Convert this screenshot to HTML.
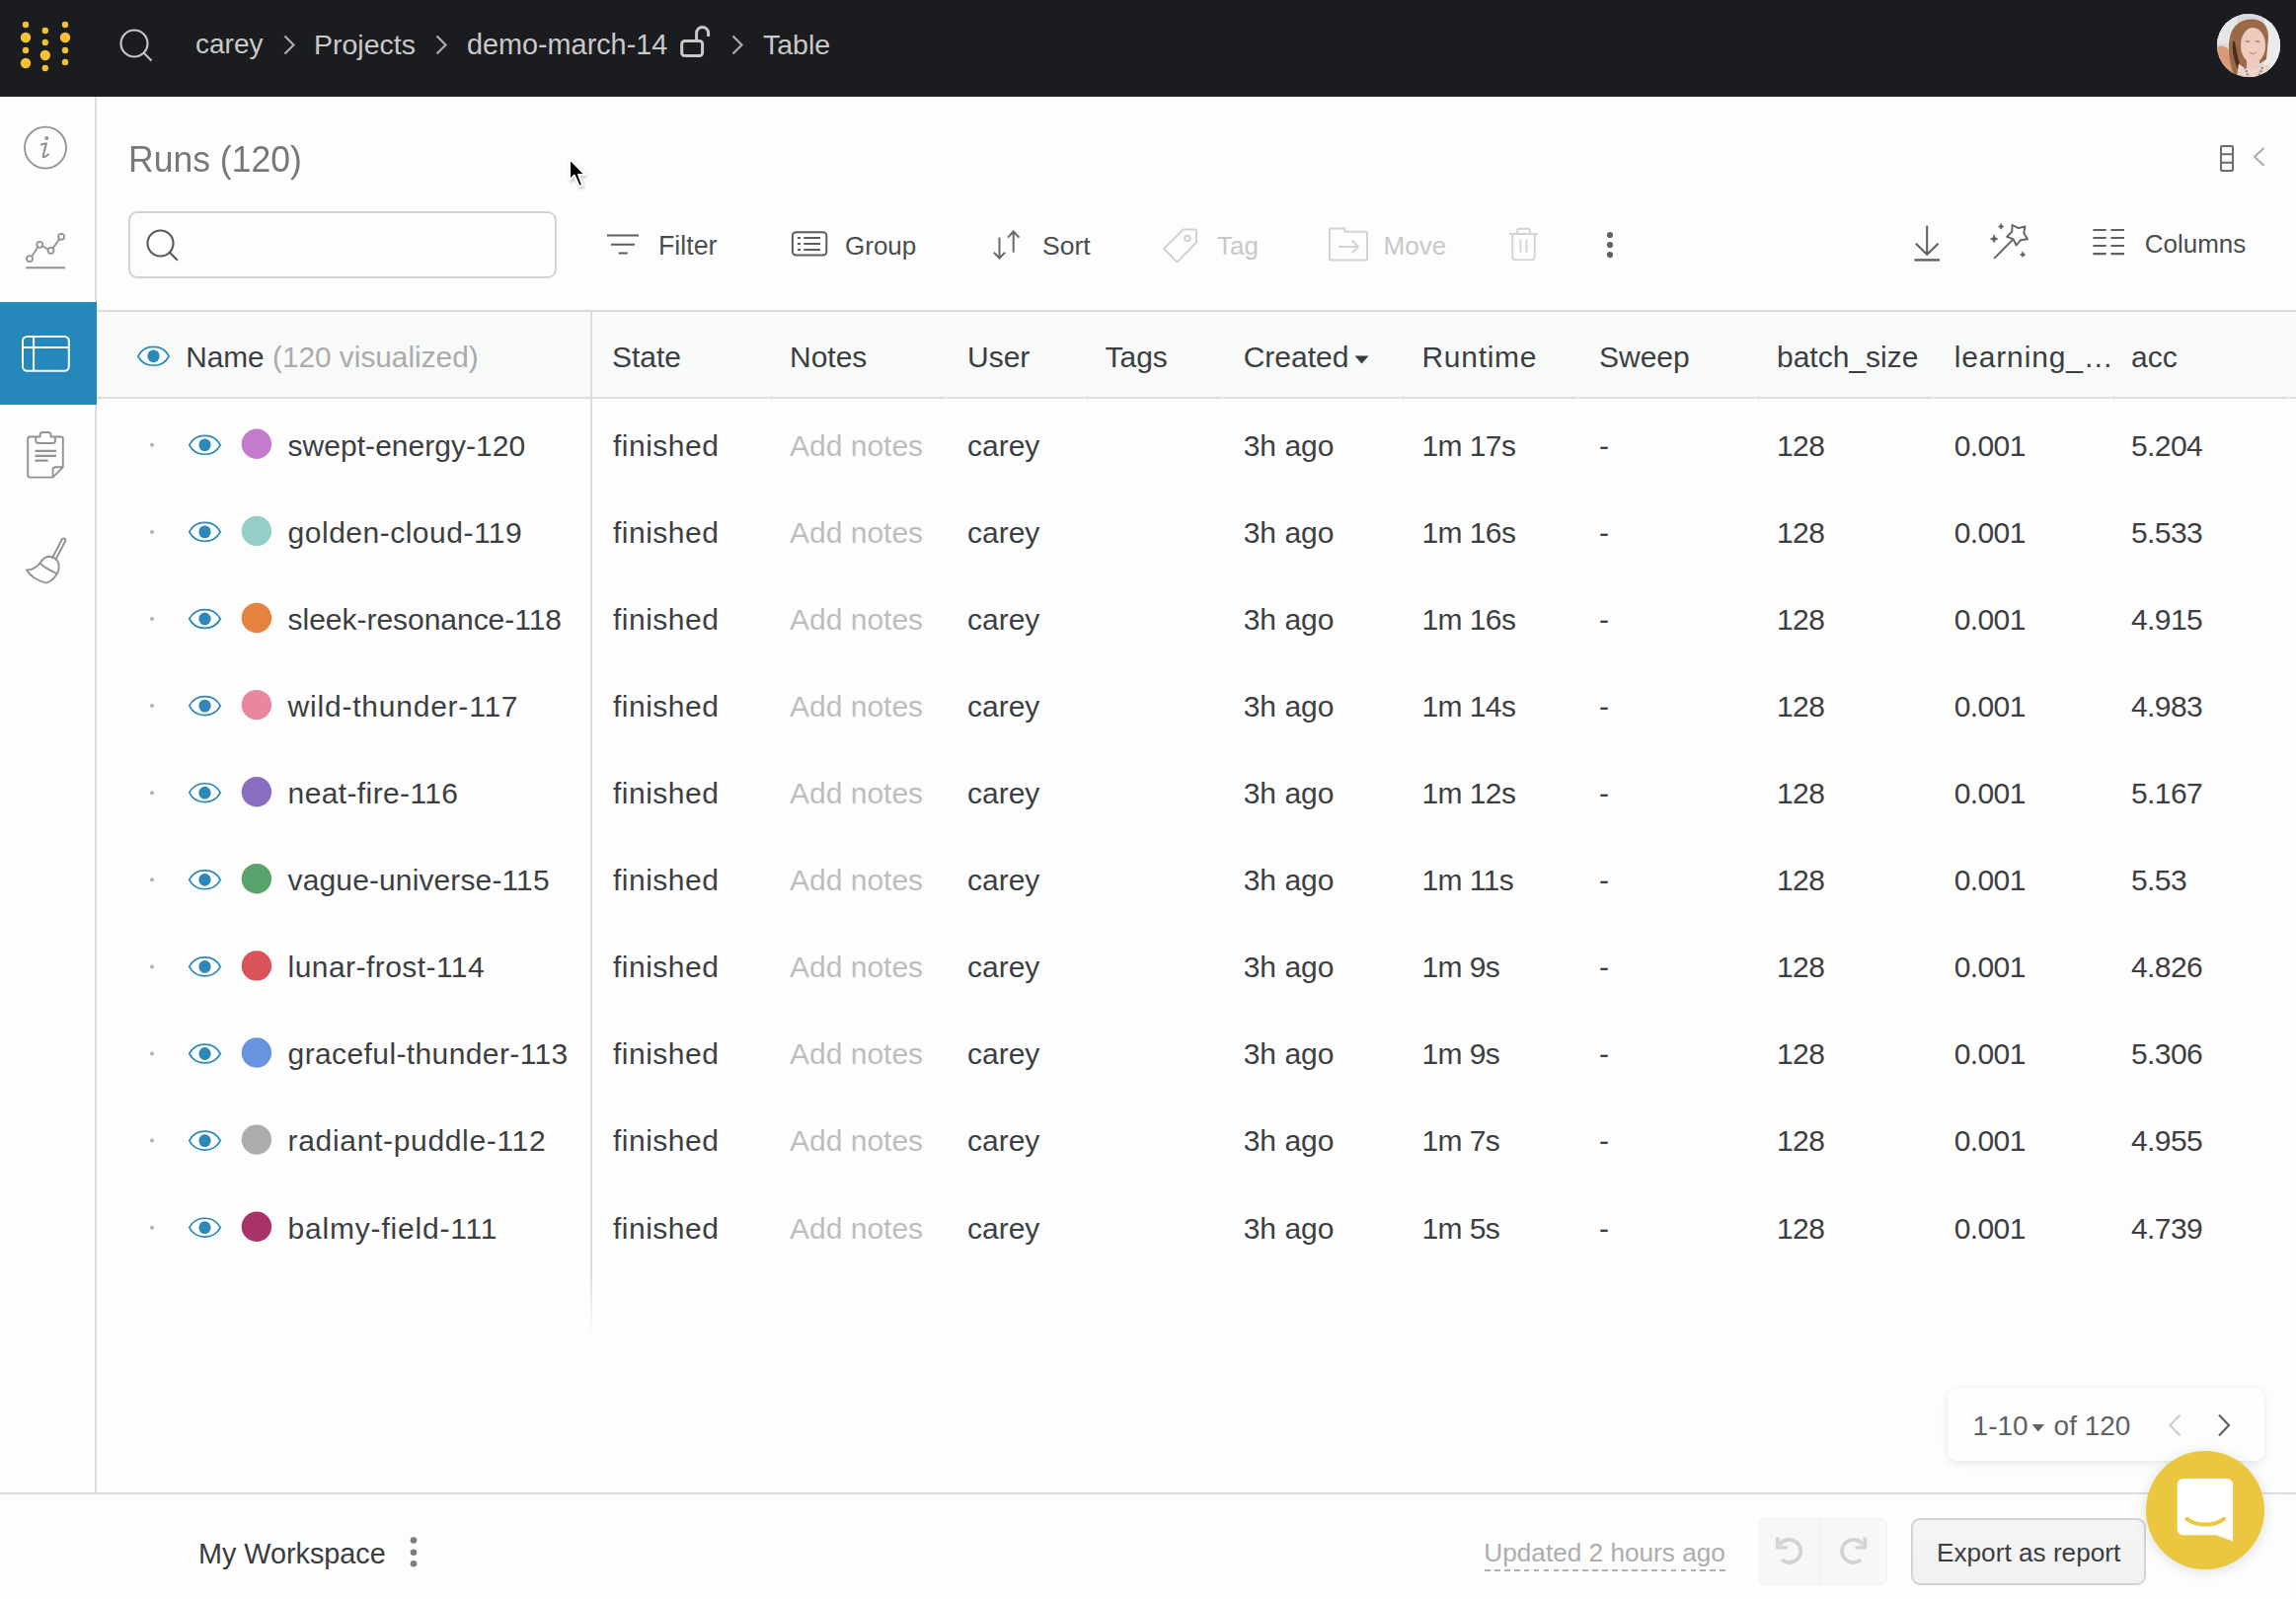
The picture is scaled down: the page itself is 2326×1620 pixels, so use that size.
<!DOCTYPE html>
<html><head><meta charset="utf-8">
<style>
*{box-sizing:border-box;margin:0;padding:0}
html,body{width:2326px;height:1620px;overflow:hidden;background:#fdfdfd;font-family:"Liberation Sans",sans-serif;}
body{position:relative}
.a{position:absolute;white-space:nowrap;line-height:1}
svg{position:absolute;overflow:visible}
#top{position:absolute;left:0;top:0;width:2326px;height:98px;background:#1b1c1f}
.bc{color:#c9c9c9;font-size:28px}
#side{position:absolute;left:0;top:98px;width:98px;height:1414px;border-right:2px solid #dedede}
.tb{color:#4a4d50;font-size:26px}
.dis{color:#c8c8c8}
.hd{color:#3c3f42;font-size:30px}
.cell{color:#3c3f42;font-size:30px}
.num{letter-spacing:-0.6px}
</style></head><body>
<div id="top">
<svg width="100" height="97" style="left:0;top:0" fill="#f3c132">
<circle cx="26" cy="25" r="3.2"/><circle cx="26" cy="38" r="5.2"/><circle cx="26" cy="51" r="3.2"/><circle cx="26" cy="64" r="5.2"/>
<circle cx="45.8" cy="31" r="3.2"/><circle cx="45.8" cy="43" r="3.2"/><circle cx="45.8" cy="56" r="5.2"/><circle cx="45.8" cy="69" r="3.2"/>
<circle cx="66" cy="25" r="3.2"/><circle cx="66" cy="38" r="5.2"/><circle cx="66" cy="51" r="3.2"/><circle cx="66" cy="63" r="3.2"/>
</svg>
<svg width="40" height="40" style="left:120;top:28px;left:120px" fill="none" stroke="#c4c4c4" stroke-width="2.2"><circle cx="16" cy="16" r="13.5"/><path d="M25.5 25.5L33.5 33.5"/></svg>
<div class="a bc" style="left:198px;top:31px">carey</div>
<svg width="20" height="30" style="left:280px;top:30px" fill="none" stroke="#a9acae" stroke-width="2.2"><path d="M8.5 6.5L17.5 15.5L8.5 24.5"/></svg>
<div class="a bc" style="left:318px;top:31px;font-size:28.5px">Projects</div>
<svg width="20" height="30" style="left:434px;top:30px" fill="none" stroke="#a9acae" stroke-width="2.2"><path d="M8.5 6.5L17.5 15.5L8.5 24.5"/></svg>
<div class="a bc" style="left:473px;top:30.5px;font-size:28.8px">demo-march-14</div>
<svg width="40" height="40" style="left:680px;top:20px" fill="none" stroke="#c9c9c9" stroke-width="3"><rect x="10.7" y="21.5" width="20.9" height="15.1" rx="3"/><path d="M25.6 21V13.5A6 6 0 0 1 37.6 13.5V17"/></svg>
<svg width="20" height="30" style="left:734px;top:30px" fill="none" stroke="#a9acae" stroke-width="2.2"><path d="M8.5 6.5L17.5 15.5L8.5 24.5"/></svg>
<div class="a bc" style="left:773px;top:31px;font-size:28.5px">Table</div>
<div style="position:absolute;left:2246px;top:14px;width:64px;height:64px;border-radius:50%;overflow:hidden;background:#dedfe0">
<svg width="64" height="64" style="left:0;top:0">
<rect width="64" height="64" fill="#d9dadb"/>
<rect x="0" y="0" width="20" height="30" fill="#e6e6e6"/>
<rect x="48" y="0" width="16" height="64" fill="#ececec"/>
<path d="M0 34C6 30 12 34 14 42L18 64H0Z" fill="#d99a78"/>
<path d="M14 20C18 8 30 4 40 6C48 8 52 14 52 24L50 46L44 50L26 56L28 64H18C12 50 10 32 14 20Z" fill="#9a6a48"/>
<ellipse cx="36.5" cy="32" rx="12.5" ry="18" fill="#eecbbd"/><rect x="30" y="44" width="13" height="12" fill="#eecbbd"/>
<path d="M18 28C20 38 21 46 25 56L22 58C17 48 15 38 16 28Z" fill="#4b2e1e"/>
<path d="M22 50C28 58 44 58 52 50L54 64H20Z" fill="#efd3c8"/>
<path d="M28 54L32 64M46 54L42 64" stroke="#8a8a8a" stroke-width="2.4" stroke-dasharray="2 1.5"/>
<ellipse cx="31" cy="28" rx="2.5" ry="1" fill="#a38d82"/><ellipse cx="41" cy="28" rx="2.5" ry="1" fill="#a38d82"/>
<path d="M33 39C35 40.5 38 40.5 40 39" stroke="#c98f86" stroke-width="1.2" fill="none"/>
</svg></div>
</div>
<div id="side"></div>
<svg width="60" height="60" style="left:16px;top:120px" fill="none" stroke="#909396" stroke-width="1.8">
<circle cx="30" cy="29.6" r="21"/>
<circle cx="31.25" cy="20.1" r="2" fill="#909396" stroke="none"/>
<path d="M25.9 26.6L30.9 25.3L27.7 37.8C27.3 39.6 28.6 40.1 32.9 36.5" stroke-width="2.1" stroke-linecap="round" stroke-linejoin="round"/>
</svg>
<svg width="60" height="60" style="left:16px;top:220px" fill="none" stroke="#909396" stroke-width="1.8">
<path d="M16.5 39.3L22 31 M27.3 29.5L32.3 32.3 M37.5 31.8L44 22.5"/>
<circle cx="14" cy="42.1" r="3"/><circle cx="24.3" cy="27.8" r="3"/><circle cx="35.5" cy="33.8" r="3"/><circle cx="46.1" cy="19.8" r="3"/>
<path d="M10.2 51.2H49.9" stroke-width="2"/>
</svg>
<div style="position:absolute;left:0;top:306px;width:98px;height:104px;background:#2587ba"></div>
<svg width="60" height="60" style="left:16px;top:328px" fill="none" stroke="#fff" stroke-width="2">
<rect x="7" y="13" width="46.8" height="34.8" rx="4.5"/><path d="M7 24H53.8 M18.1 13V47.8"/>
</svg>
<svg width="60" height="60" style="left:16px;top:420px" fill="none" stroke="#909396" stroke-width="1.9" stroke-linejoin="round">
<path d="M20 22.5H14.5C13 22.5 12.2 23.3 12.2 24.8V61.3C12.2 62.8 13 63.6 14.5 63.6H37.5L47.8 53.3V24.8C47.8 23.3 47 22.5 45.5 22.5H40"/>
<path d="M37.5 63.6V56.3C37.5 54.3 38.5 53.3 40.5 53.3H47.8"/>
<path d="M20.2 22.5V26.3C20.2 28 21 29 23 29H37.5C39.3 29 40 28 40 26.3V22.5H35.6V20.6C35.6 18.8 34.3 18 32.6 18H27.5C25.8 18 24.6 18.8 24.6 20.6V22.5Z"/>
<path d="M19.5 36.9H41 M19.5 41.9H41 M19.5 46.7H32.7" stroke-width="2.2"/>
</svg>
<svg width="60" height="60" style="left:16px;top:530px" fill="none" stroke="#909396" stroke-width="1.9" stroke-linejoin="round" stroke-linecap="round">
<path d="M37.1 35.3L46.7 16.5A1.9 1.9 0 0 1 50.1 18.3L40.4 37"/>
<path d="M10.9 47.5C17 47.5 21.5 44 24.6 40.3C27.5 36 29.5 33.7 33.5 33.7C40 34 44.5 38.5 43.6 46C43 52 37 59 30.8 60.6C22 58.5 14.5 53 10.9 47.5Z"/>
<path d="M25 41C29.5 45.5 35 47.8 40.2 50.4"/>
</svg>
<!--MAIN-->
<div class="a" style="left:130px;top:143.2px;font-size:37.8px;color:#767879;transform:scaleX(0.94);transform-origin:0 0">Runs (120)</div>
<div style="position:absolute;left:130px;top:214px;width:434px;height:68px;border:2px solid #d3d3d3;border-radius:9px;background:#fdfdfd"></div>
<svg width="40" height="40" style="left:142.5px;top:226.5px" fill="none" stroke="#575a5d" stroke-width="2.1"><circle cx="19.5" cy="19.5" r="13"/><path d="M28.8 28.8L36.8 36.8"/></svg>
<svg width="40" height="30" style="left:610px;top:230px" fill="none" stroke="#5a5d60" stroke-width="2"><path d="M5 8.5H37 M9 17.8H33 M16.7 26.6H25.7"/></svg>
<div class="a tb" style="left:667px;top:236px;font-size:26.8px">Filter</div>
<svg width="40" height="30" style="left:797px;top:230px" fill="none" stroke="#5a5d60" stroke-width="2"><rect x="5.9" y="5.2" width="34.4" height="23.4" rx="3.5"/><path d="M10.9 11H14 M17.3 11H34 M10.9 17H14 M17.3 17H34 M10.9 23H14 M17.3 23H34" stroke-width="1.8"/></svg>
<div class="a tb" style="left:856px;top:235.5px">Group</div>
<svg width="40" height="36" style="left:1000px;top:228px" fill="none" stroke="#66696c" stroke-width="2"><path d="M12.5 12.4V33.5 M6.9 27.7L12.5 33.5L18.2 27.7 M26.7 6.5V27.7 M21 12.6L26.7 6.5L32.4 12.6"/></svg>
<div class="a tb" style="left:1056px;top:236px;font-size:26.5px">Sort</div>
<svg width="44" height="44" style="left:1170px;top:226px" fill="none" stroke="#d3d3d3" stroke-width="2" stroke-linejoin="round"><path d="M28.6 6.5H40.5C41.5 6.5 42 7 42 8V19.5L22.5 39.6L9 26Z"/><circle cx="32.9" cy="15.5" r="2.8"/></svg>
<div class="a tb dis" style="left:1233px;top:236px">Tag</div>
<svg width="44" height="40" style="left:1340px;top:226px" fill="none" stroke="#d3d3d3" stroke-width="2" stroke-linejoin="round"><path d="M8 5.5H22.4V8.8H44C44.6 8.8 45 9.2 45 9.8V36.6C45 37.2 44.6 37.6 44 37.6H8C7.4 37.6 7 37.2 7 36.6V6.5C7 5.9 7.4 5.5 8 5.5Z"/><path d="M15.9 23.9H35.9 M29.9 17.5L35.9 23.9L29.9 30.3"/></svg>
<div class="a tb dis" style="left:1401.6px;top:236px">Move</div>
<svg width="40" height="40" style="left:1520px;top:226px" fill="none" stroke="#d3d3d3" stroke-width="1.9"><path d="M9 11H38 M17.1 11V8C17.1 6.5 18 5.8 19.5 5.8H27.5C29 5.8 29.9 6.5 29.9 8V11 M12.2 11V34C12.2 35.9 13.3 37.1 15.2 37.1H31.8C33.7 37.1 34.8 35.9 34.8 34V11 M20.4 16.5V29.6 M26.5 16.5V29.6"/></svg>
<svg width="20" height="40" style="left:1621px;top:228px" fill="#5f6265"><circle cx="10" cy="10" r="3.1"/><circle cx="10" cy="20.1" r="3.1"/><circle cx="10" cy="30.1" r="3.1"/></svg>
<svg width="40" height="44" style="left:1932px;top:222px" fill="none" stroke="#5f6265" stroke-width="2.1" stroke-linecap="round"><path d="M20.2 7.5V35.5 M9.5 25.3L20.2 35.9L31 25.3"/><path d="M7.5 41.4H33" stroke-width="2.4" stroke-linecap="butt"/></svg>
<svg width="44" height="44" style="left:2012px;top:222px" fill="none" stroke="#5f6265" stroke-width="1.9" stroke-linejoin="round" stroke-linecap="round">
<path d="M8.7 39.3L26.6 21.3"/>
<path d="M26.6 6.0L32.7 9.2L39.4 7.5L38.3 14.3L42.0 20.2L35.1 21.2L30.7 26.5L27.7 20.3L21.2 17.8L26.2 12.9Z"/>
<path d="M15.2 4.8l0.9 1.8 1.8 0.9-1.8 0.9-0.9 1.8-0.9-1.8-1.8-0.9 1.8-0.9z" fill="#5f6265" stroke-width="0.8"/>
<path d="M8.2 16.3l1.2 2.5 2.5 1.2-2.5 1.2-1.2 2.5-1.2-2.5-2.5-1.2 2.5-1.2z" fill="#5f6265" stroke-width="0.8"/>
<path d="M37.2 33.2l0.9 1.8 1.8 0.9-1.8 0.9-0.9 1.8-0.9-1.8-1.8-0.9 1.8-0.9z" fill="#5f6265" stroke-width="0.8"/>
</svg>
<svg width="40" height="36" style="left:2114px;top:222px" fill="none" stroke="#5f6265" stroke-width="2.1"><path d="M6.4 11H19.7 M24.4 11H38 M6.4 19H19.7 M24.4 19H38 M6.4 27H19.7 M24.4 27H38 M6.4 35.1H19.7 M24.4 35.1H38"/></svg>
<div class="a tb" style="left:2172.7px;top:233.5px">Columns</div>
<svg width="20" height="34" style="left:2245px;top:143px" fill="none" stroke="#6a6d70" stroke-width="2"><rect x="5" y="5" width="12" height="25" rx="1"/><path d="M5 13.3H17 M5 21.8H17"/></svg>
<svg width="20" height="30" style="left:2278px;top:143px" fill="none" stroke="#a9abad" stroke-width="2"><path d="M15.5 7L6 15.8L15.5 24.7"/></svg>
<div style="position:absolute;left:98px;top:314px;width:2228px;height:90px;background:#f8f9f9;border-top:2px solid #dcdcdc;border-bottom:2px solid #dcdcdc"></div>
<div style="position:absolute;left:598px;top:314px;width:1.8px;height:1040px;background:linear-gradient(#dcdcdc 0,#dcdcdc 976px,rgba(220,220,220,0) 1040px)"></div>
<div class="a hd" style="left:188.2px;top:347px;font-size:29.8px">Name <span style="color:#a9abad">(120 visualized)</span></div>
<div class="a hd" style="left:620px;top:346.6px">State</div>
<div class="a hd" style="left:800px;top:346.6px">Notes</div>
<div class="a hd" style="left:980px;top:346.6px">User</div>
<div class="a hd" style="left:1119.5px;top:346.6px">Tags</div>
<div class="a hd" style="left:1259.7px;top:346.6px">Created</div>
<div class="a hd" style="left:1440.5px;top:346.6px;letter-spacing:0.7px">Runtime</div>
<div class="a hd" style="left:1620px;top:346.6px">Sweep</div>
<div class="a hd" style="left:1800px;top:346.6px">batch_size</div>
<div class="a hd" style="left:1979.7px;top:346.6px;letter-spacing:0.85px">learning_…</div>
<div class="a hd" style="left:2159px;top:346.6px">acc</div>
<div class="a cell" style="left:291.6px;top:436.6px;letter-spacing:0.03px">swept-energy-120</div>
<div class="a cell" style="left:621px;top:436.6px;letter-spacing:0.5px">finished</div>
<div class="a cell" style="color:#bdbdbd;left:800px;top:436.6px">Add notes</div>
<div class="a cell" style="left:980px;top:436.6px">carey</div>
<div class="a cell" style="left:1259.7px;top:436.6px">3h ago</div>
<div class="a cell num" style="left:1440.5px;top:436.6px">1m 17s</div>
<div class="a cell" style="left:1620px;top:436.6px">-</div>
<div class="a cell num" style="left:1800px;top:436.6px">128</div>
<div class="a cell num" style="left:1979.7px;top:436.6px">0.001</div>
<div class="a cell num" style="left:2159px;top:436.6px">5.204</div>
<div class="a cell" style="left:291.6px;top:524.7px;letter-spacing:0.50px">golden-cloud-119</div>
<div class="a cell" style="left:621px;top:524.7px;letter-spacing:0.5px">finished</div>
<div class="a cell" style="color:#bdbdbd;left:800px;top:524.7px">Add notes</div>
<div class="a cell" style="left:980px;top:524.7px">carey</div>
<div class="a cell" style="left:1259.7px;top:524.7px">3h ago</div>
<div class="a cell num" style="left:1440.5px;top:524.7px">1m 16s</div>
<div class="a cell" style="left:1620px;top:524.7px">-</div>
<div class="a cell num" style="left:1800px;top:524.7px">128</div>
<div class="a cell num" style="left:1979.7px;top:524.7px">0.001</div>
<div class="a cell num" style="left:2159px;top:524.7px">5.533</div>
<div class="a cell" style="left:291.6px;top:612.8px;letter-spacing:-0.03px">sleek-resonance-118</div>
<div class="a cell" style="left:621px;top:612.8px;letter-spacing:0.5px">finished</div>
<div class="a cell" style="color:#bdbdbd;left:800px;top:612.8px">Add notes</div>
<div class="a cell" style="left:980px;top:612.8px">carey</div>
<div class="a cell" style="left:1259.7px;top:612.8px">3h ago</div>
<div class="a cell num" style="left:1440.5px;top:612.8px">1m 16s</div>
<div class="a cell" style="left:1620px;top:612.8px">-</div>
<div class="a cell num" style="left:1800px;top:612.8px">128</div>
<div class="a cell num" style="left:1979.7px;top:612.8px">0.001</div>
<div class="a cell num" style="left:2159px;top:612.8px">4.915</div>
<div class="a cell" style="left:291.6px;top:700.9px;letter-spacing:0.78px">wild-thunder-117</div>
<div class="a cell" style="left:621px;top:700.9px;letter-spacing:0.5px">finished</div>
<div class="a cell" style="color:#bdbdbd;left:800px;top:700.9px">Add notes</div>
<div class="a cell" style="left:980px;top:700.9px">carey</div>
<div class="a cell" style="left:1259.7px;top:700.9px">3h ago</div>
<div class="a cell num" style="left:1440.5px;top:700.9px">1m 14s</div>
<div class="a cell" style="left:1620px;top:700.9px">-</div>
<div class="a cell num" style="left:1800px;top:700.9px">128</div>
<div class="a cell num" style="left:1979.7px;top:700.9px">0.001</div>
<div class="a cell num" style="left:2159px;top:700.9px">4.983</div>
<div class="a cell" style="left:291.6px;top:789.0px;letter-spacing:0.38px">neat-fire-116</div>
<div class="a cell" style="left:621px;top:789.0px;letter-spacing:0.5px">finished</div>
<div class="a cell" style="color:#bdbdbd;left:800px;top:789.0px">Add notes</div>
<div class="a cell" style="left:980px;top:789.0px">carey</div>
<div class="a cell" style="left:1259.7px;top:789.0px">3h ago</div>
<div class="a cell num" style="left:1440.5px;top:789.0px">1m 12s</div>
<div class="a cell" style="left:1620px;top:789.0px">-</div>
<div class="a cell num" style="left:1800px;top:789.0px">128</div>
<div class="a cell num" style="left:1979.7px;top:789.0px">0.001</div>
<div class="a cell num" style="left:2159px;top:789.0px">5.167</div>
<div class="a cell" style="left:291.6px;top:877.1px;letter-spacing:0.12px">vague-universe-115</div>
<div class="a cell" style="left:621px;top:877.1px;letter-spacing:0.5px">finished</div>
<div class="a cell" style="color:#bdbdbd;left:800px;top:877.1px">Add notes</div>
<div class="a cell" style="left:980px;top:877.1px">carey</div>
<div class="a cell" style="left:1259.7px;top:877.1px">3h ago</div>
<div class="a cell num" style="left:1440.5px;top:877.1px">1m 11s</div>
<div class="a cell" style="left:1620px;top:877.1px">-</div>
<div class="a cell num" style="left:1800px;top:877.1px">128</div>
<div class="a cell num" style="left:1979.7px;top:877.1px">0.001</div>
<div class="a cell num" style="left:2159px;top:877.1px">5.53</div>
<div class="a cell" style="left:291.6px;top:965.2px;letter-spacing:0.44px">lunar-frost-114</div>
<div class="a cell" style="left:621px;top:965.2px;letter-spacing:0.5px">finished</div>
<div class="a cell" style="color:#bdbdbd;left:800px;top:965.2px">Add notes</div>
<div class="a cell" style="left:980px;top:965.2px">carey</div>
<div class="a cell" style="left:1259.7px;top:965.2px">3h ago</div>
<div class="a cell num" style="left:1440.5px;top:965.2px">1m 9s</div>
<div class="a cell" style="left:1620px;top:965.2px">-</div>
<div class="a cell num" style="left:1800px;top:965.2px">128</div>
<div class="a cell num" style="left:1979.7px;top:965.2px">0.001</div>
<div class="a cell num" style="left:2159px;top:965.2px">4.826</div>
<div class="a cell" style="left:291.6px;top:1053.3px;letter-spacing:0.39px">graceful-thunder-113</div>
<div class="a cell" style="left:621px;top:1053.3px;letter-spacing:0.5px">finished</div>
<div class="a cell" style="color:#bdbdbd;left:800px;top:1053.3px">Add notes</div>
<div class="a cell" style="left:980px;top:1053.3px">carey</div>
<div class="a cell" style="left:1259.7px;top:1053.3px">3h ago</div>
<div class="a cell num" style="left:1440.5px;top:1053.3px">1m 9s</div>
<div class="a cell" style="left:1620px;top:1053.3px">-</div>
<div class="a cell num" style="left:1800px;top:1053.3px">128</div>
<div class="a cell num" style="left:1979.7px;top:1053.3px">0.001</div>
<div class="a cell num" style="left:2159px;top:1053.3px">5.306</div>
<div class="a cell" style="left:291.6px;top:1141.4px;letter-spacing:0.67px">radiant-puddle-112</div>
<div class="a cell" style="left:621px;top:1141.4px;letter-spacing:0.5px">finished</div>
<div class="a cell" style="color:#bdbdbd;left:800px;top:1141.4px">Add notes</div>
<div class="a cell" style="left:980px;top:1141.4px">carey</div>
<div class="a cell" style="left:1259.7px;top:1141.4px">3h ago</div>
<div class="a cell num" style="left:1440.5px;top:1141.4px">1m 7s</div>
<div class="a cell" style="left:1620px;top:1141.4px">-</div>
<div class="a cell num" style="left:1800px;top:1141.4px">128</div>
<div class="a cell num" style="left:1979.7px;top:1141.4px">0.001</div>
<div class="a cell num" style="left:2159px;top:1141.4px">4.955</div>
<div class="a cell" style="left:291.6px;top:1229.5px;letter-spacing:0.80px">balmy-field-111</div>
<div class="a cell" style="left:621px;top:1229.5px;letter-spacing:0.5px">finished</div>
<div class="a cell" style="color:#bdbdbd;left:800px;top:1229.5px">Add notes</div>
<div class="a cell" style="left:980px;top:1229.5px">carey</div>
<div class="a cell" style="left:1259.7px;top:1229.5px">3h ago</div>
<div class="a cell num" style="left:1440.5px;top:1229.5px">1m 5s</div>
<div class="a cell" style="left:1620px;top:1229.5px">-</div>
<div class="a cell num" style="left:1800px;top:1229.5px">128</div>
<div class="a cell num" style="left:1979.7px;top:1229.5px">0.001</div>
<div class="a cell num" style="left:2159px;top:1229.5px">4.739</div>
<svg width="2326" height="1620" style="left:0;top:0">
<path d="M139.8 360.8C146.3 348.2 164.7 348.2 171.2 360.8C164.7 373.4 146.3 373.4 139.8 360.8Z" fill="none" stroke="#2a88bb" stroke-width="1.7"/><ellipse cx="155.5" cy="360.8" rx="6.1" ry="6.4" fill="#2a88bb"/>
<path d="M1372.5 360.5H1386.5L1379.5 368.5Z" fill="#3a3d40"/>
<circle cx="154" cy="450.8" r="2" fill="#b3b3b3"/>
<path d="M191.8 450.8C198.3 438.2 216.7 438.2 223.2 450.8C216.7 463.4 198.3 463.4 191.8 450.8Z" fill="none" stroke="#2a88bb" stroke-width="1.7"/><ellipse cx="207.5" cy="450.8" rx="6.1" ry="6.4" fill="#2a88bb"/>
<circle cx="259.9" cy="449.8" r="15.2" fill="#c27ccb"/>
<circle cx="154" cy="538.9" r="2" fill="#b3b3b3"/>
<path d="M191.8 538.9C198.3 526.3 216.7 526.3 223.2 538.9C216.7 551.5 198.3 551.5 191.8 538.9Z" fill="none" stroke="#2a88bb" stroke-width="1.7"/><ellipse cx="207.5" cy="538.9" rx="6.1" ry="6.4" fill="#2a88bb"/>
<circle cx="259.9" cy="537.9" r="15.2" fill="#95cdc8"/>
<circle cx="154" cy="627.0" r="2" fill="#b3b3b3"/>
<path d="M191.8 627.0C198.3 614.4 216.7 614.4 223.2 627.0C216.7 639.6 198.3 639.6 191.8 627.0Z" fill="none" stroke="#2a88bb" stroke-width="1.7"/><ellipse cx="207.5" cy="627.0" rx="6.1" ry="6.4" fill="#2a88bb"/>
<circle cx="259.9" cy="626.0" r="15.2" fill="#e4823e"/>
<circle cx="154" cy="715.1" r="2" fill="#b3b3b3"/>
<path d="M191.8 715.1C198.3 702.5 216.7 702.5 223.2 715.1C216.7 727.7 198.3 727.7 191.8 715.1Z" fill="none" stroke="#2a88bb" stroke-width="1.7"/><ellipse cx="207.5" cy="715.1" rx="6.1" ry="6.4" fill="#2a88bb"/>
<circle cx="259.9" cy="714.1" r="15.2" fill="#e8879f"/>
<circle cx="154" cy="803.2" r="2" fill="#b3b3b3"/>
<path d="M191.8 803.2C198.3 790.6 216.7 790.6 223.2 803.2C216.7 815.8 198.3 815.8 191.8 803.2Z" fill="none" stroke="#2a88bb" stroke-width="1.7"/><ellipse cx="207.5" cy="803.2" rx="6.1" ry="6.4" fill="#2a88bb"/>
<circle cx="259.9" cy="802.2" r="15.2" fill="#8a6cc1"/>
<circle cx="154" cy="891.3" r="2" fill="#b3b3b3"/>
<path d="M191.8 891.3C198.3 878.7 216.7 878.7 223.2 891.3C216.7 903.9 198.3 903.9 191.8 891.3Z" fill="none" stroke="#2a88bb" stroke-width="1.7"/><ellipse cx="207.5" cy="891.3" rx="6.1" ry="6.4" fill="#2a88bb"/>
<circle cx="259.9" cy="890.3" r="15.2" fill="#58a36c"/>
<circle cx="154" cy="979.4" r="2" fill="#b3b3b3"/>
<path d="M191.8 979.4C198.3 966.8 216.7 966.8 223.2 979.4C216.7 992.0 198.3 992.0 191.8 979.4Z" fill="none" stroke="#2a88bb" stroke-width="1.7"/><ellipse cx="207.5" cy="979.4" rx="6.1" ry="6.4" fill="#2a88bb"/>
<circle cx="259.9" cy="978.4" r="15.2" fill="#d95358"/>
<circle cx="154" cy="1067.5" r="2" fill="#b3b3b3"/>
<path d="M191.8 1067.5C198.3 1054.9 216.7 1054.9 223.2 1067.5C216.7 1080.1 198.3 1080.1 191.8 1067.5Z" fill="none" stroke="#2a88bb" stroke-width="1.7"/><ellipse cx="207.5" cy="1067.5" rx="6.1" ry="6.4" fill="#2a88bb"/>
<circle cx="259.9" cy="1066.5" r="15.2" fill="#6793e0"/>
<circle cx="154" cy="1155.6" r="2" fill="#b3b3b3"/>
<path d="M191.8 1155.6C198.3 1143.0 216.7 1143.0 223.2 1155.6C216.7 1168.2 198.3 1168.2 191.8 1155.6Z" fill="none" stroke="#2a88bb" stroke-width="1.7"/><ellipse cx="207.5" cy="1155.6" rx="6.1" ry="6.4" fill="#2a88bb"/>
<circle cx="259.9" cy="1154.6" r="15.2" fill="#adadb0"/>
<circle cx="154" cy="1243.7" r="2" fill="#b3b3b3"/>
<path d="M191.8 1243.7C198.3 1231.1 216.7 1231.1 223.2 1243.7C216.7 1256.3 198.3 1256.3 191.8 1243.7Z" fill="none" stroke="#2a88bb" stroke-width="1.7"/><ellipse cx="207.5" cy="1243.7" rx="6.1" ry="6.4" fill="#2a88bb"/>
<circle cx="259.9" cy="1242.7" r="15.2" fill="#a8336b"/>
</svg>
<div style="position:absolute;left:777.8px;top:402px;width:1.2px;height:2px;background:#fbfbfb"></div><div style="position:absolute;left:957.8px;top:402px;width:1.2px;height:2px;background:#fbfbfb"></div><div style="position:absolute;left:1098.0px;top:402px;width:1.2px;height:2px;background:#fbfbfb"></div><div style="position:absolute;left:1237.5px;top:402px;width:1.2px;height:2px;background:#fbfbfb"></div><div style="position:absolute;left:1417.5px;top:402px;width:1.2px;height:2px;background:#fbfbfb"></div><div style="position:absolute;left:1598.3px;top:402px;width:1.2px;height:2px;background:#fbfbfb"></div><div style="position:absolute;left:1777.8px;top:402px;width:1.2px;height:2px;background:#fbfbfb"></div><div style="position:absolute;left:1958.1px;top:402px;width:1.2px;height:2px;background:#fbfbfb"></div><div style="position:absolute;left:2137.5px;top:402px;width:1.2px;height:2px;background:#fbfbfb"></div><div style="position:absolute;left:2318.0px;top:402px;width:1.2px;height:2px;background:#fbfbfb"></div>
<!--BOTTOM-->
<div style="position:absolute;left:0;top:1512px;width:2326px;height:2px;background:#dcdcdc"></div>
<div class="a" style="left:200.9px;top:1559.6px;font-size:28.8px;color:#3a3d40">My Workspace</div>
<svg width="20" height="40" style="left:408.6px;top:1552px" fill="#7a7d80"><circle cx="10" cy="8.5" r="3.3"/><circle cx="10" cy="20.7" r="3.3"/><circle cx="10" cy="32.3" r="3.3"/></svg>
<div class="a" style="left:1503.3px;top:1560px;font-size:26.2px;color:#adadad">Updated 2 hours ago</div>
<div style="position:absolute;left:1504.1px;top:1590.2px;width:246px;height:1.8px;background:repeating-linear-gradient(90deg,#b0b0b0 0,#b0b0b0 5.75px,transparent 5.75px,transparent 9.93px)"></div>
<div style="position:absolute;left:1782px;top:1538px;width:130px;height:68px;border-radius:7px;background:#f6f7f7;border:1px solid #f0f0f0"></div>
<div style="position:absolute;left:1843.5px;top:1539px;width:1px;height:66px;background:#ededed"></div>
<svg width="60" height="40" style="left:1790px;top:1550px" fill="none" stroke="#d2d3d4" stroke-width="4">
<path d="M13.1 14.8A11.6 11.6 0 1 1 15.1 30.3" stroke-width="3.8"/>
<path d="M8.9 7.5H12.8V16.3H20.8V19.5H8.9Z" fill="#d2d3d4" stroke="none"/>
</svg>
<svg width="60" height="40" style="left:1855px;top:1550px" fill="none" stroke="#d2d3d4" stroke-width="4">
<path d="M32.1 14.8A11.6 11.6 0 1 0 30.1 30.3" stroke-width="3.8"/>
<path d="M36.3 7.5H32.4V16.3H24.4V19.5H36.3Z" fill="#d2d3d4" stroke="none"/>
</svg>
<div style="position:absolute;left:1936px;top:1538px;width:237.5px;height:67.8px;border-radius:9px;background:linear-gradient(#f5f5f5,#f1f1f1);border:2px solid #d2d3d4"></div>
<div class="a" style="left:1962px;top:1560px;font-size:26.2px;color:#3a3d40">Export as report</div>
<div style="position:absolute;left:1973px;top:1406px;width:321px;height:74px;border-radius:9px;background:#fdfdfd;box-shadow:0 3px 8px rgba(0,0,0,0.08),0 0 3px rgba(0,0,0,0.04)"></div>
<div class="a" style="left:1998.6px;top:1430.6px;font-size:28px;color:#5f6265">1-10</div>
<svg width="20" height="20" style="left:2055px;top:1438px"><path d="M3.6 5H16L9.8 12.5Z" fill="#5f6265"/></svg>
<div class="a" style="left:2080.6px;top:1430.6px;font-size:28px;color:#5f6265">of 120</div>
<svg width="20" height="34" style="left:2193px;top:1427px" fill="none" stroke="#cdcdcd" stroke-width="2.2"><path d="M15.5 6.5L5.5 17L15.5 27.5"/></svg>
<svg width="20" height="34" style="left:2243px;top:1427px" fill="none" stroke="#5f6265" stroke-width="2.2"><path d="M5 6.5L15 17L5 27.5"/></svg>
<div style="position:absolute;left:2174px;top:1470px;width:120px;height:120px;border-radius:50%;background:#ebc73f;box-shadow:0 2px 14px rgba(0,0,0,0.12)"></div>
<svg width="120" height="120" style="left:2174px;top:1470px">
<path d="M38.2 28H81.6C85.5 28 88.1 30.6 88.1 34.5V91.5L71.4 85.2H38.2C34.3 85.2 31.7 82.6 31.7 78.7V34.5C31.7 30.6 34.3 28 38.2 28Z" fill="#fff"/>
<path d="M41.3 68.8C51 76.5 69 76.5 78.9 68.8" fill="none" stroke="#ebc73f" stroke-width="4" stroke-linecap="round"/>
</svg>

<svg width="30" height="40" style="left:570px;top:156px;filter:drop-shadow(1px 2px 1.5px rgba(0,0,0,0.22))"><path d="M7.1 5V26.5L11.8 21.6L16.9 32.9L20.1 31.6L16.1 20.9H22.7Z" fill="#000" stroke="#fff" stroke-width="2" stroke-linejoin="round"/></svg>
</body></html>
